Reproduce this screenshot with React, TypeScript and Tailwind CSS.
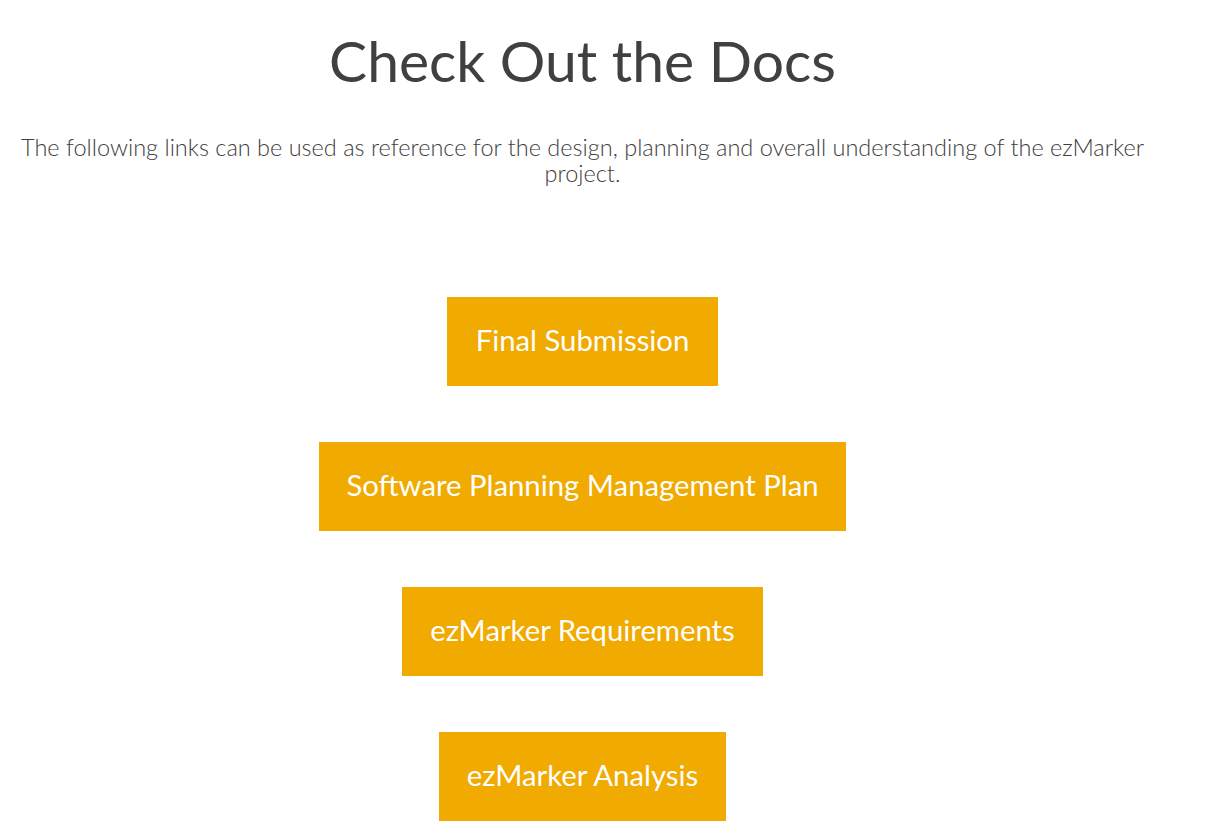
import React from "react";

const links = [
  { label: "Final Submission", w: "w-[271px]" },
  { label: "Software Planning Management Plan", w: "w-[527px]" },
  { label: "ezMarker Requirements", w: "w-[361px]" },
  { label: "ezMarker Analysis", w: "w-[287px]" },
];

export default function App() {
  return (
    <div className="min-h-[836px] bg-white" style={{ fontFamily: "Lato, 'Open Sans', sans-serif" }}>
      <div className="w-[1165px] flex flex-col items-center text-center">
        <h1 className="mt-[28px] text-[57px] leading-[64px] font-normal text-[#404040]">Check Out the Docs</h1>
        <p className="mt-[42px] px-[14px] text-[23.5px] leading-[26px] font-light text-[#404040]">
          The following links can be used as reference for the design, planning and overall understanding of the ezMarker project.
        </p>
        <div className="mt-[111px] flex flex-col items-center gap-[56px]">
          {links.map((l) => (
            <a
              key={l.label}
              href="#"
              className={`${l.w} h-[89px] pb-[4px] flex items-center justify-center bg-[#f0aa00] text-white text-[29.3px] font-normal`}
            >
              {l.label}
            </a>
          ))}
        </div>
      </div>
    </div>
  );
}
